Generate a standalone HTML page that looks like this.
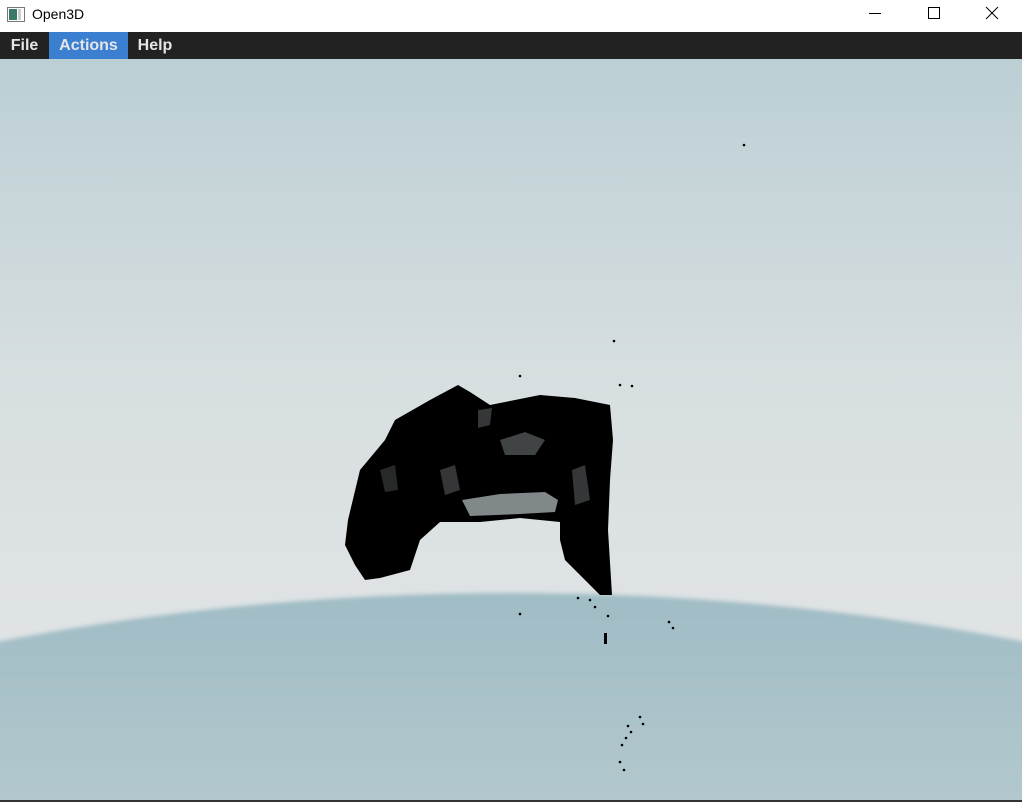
<!DOCTYPE html>
<html><head><style>
html,body{margin:0;padding:0;width:1022px;height:802px;overflow:hidden;background:#fff;font-family:"Liberation Sans","Noto Sans CJK SC",sans-serif}
.title{position:absolute;left:0;top:0;width:1022px;height:32px;background:#fff}
.title .t{position:absolute;left:32px;top:6px;font-size:14px;color:#000}
.menu{position:absolute;left:0;top:32px;width:1022px;height:27px;background:#222}
.menu span{position:absolute;top:0;height:27px;line-height:27px;color:#e6e6e6;font-size:16px;font-weight:bold}
svg{display:block}
</style></head><body>
<div class="title">
<svg style="position:absolute;left:7px;top:7px" width="18" height="16"><rect x="0.5" y="0.5" width="17" height="14" fill="#fff" stroke="#777"/><rect x="2" y="2" width="8" height="11" fill="#3b7a6a"/><rect x="11" y="2" width="3" height="11" fill="#ccc"/></svg>
<div class="t">Open3D</div>
<svg style="position:absolute;left:860px;top:0" width="162" height="32" stroke="#000" stroke-width="1" fill="none">
<line x1="9" y1="13.5" x2="21" y2="13.5"/>
<rect x="68.5" y="7.5" width="11" height="11"/>
<line x1="126" y1="7" x2="138" y2="19"/><line x1="138" y1="7" x2="126" y2="19"/>
</svg>
</div>
<div class="menu">
<span style="left:0;width:49px;text-align:center">File</span>
<span style="left:49px;width:79px;background:#3b7fd0;text-align:center">Actions</span>
<span style="left:128px;width:54px;text-align:center">Help</span>
</div>
<svg style="position:absolute;left:0;top:59px" width="1022" height="743" viewBox="0 59 1022 743">
<defs>
<linearGradient id="sky" x1="0" y1="0" x2="0" y2="1">
<stop offset="0" stop-color="#bccfd4"/><stop offset="0.45" stop-color="#d8dfe1"/><stop offset="1" stop-color="#e4e6e7"/></linearGradient>
<linearGradient id="gr" x1="0" y1="592" x2="0" y2="800" gradientUnits="userSpaceOnUse">
<stop offset="0" stop-color="#a0bcc5"/><stop offset="1" stop-color="#b2c8cd"/></linearGradient>
<filter id="bl"><feGaussianBlur stdDeviation="2"/></filter>
</defs>
<rect x="0" y="59" width="1022" height="743" fill="url(#sky)"/>
<ellipse cx="511" cy="1400" rx="1500" ry="807" fill="url(#gr)" filter="url(#bl)"/>
<rect x="0" y="800" width="1022" height="2" fill="#333"/>
<g fill="#000">
<path d="M348,520 L360,470 L385,440 L395,420 L430,400 L458,385 L470,392 L490,405 L540,395 L575,398 L610,405 L613,440 L610,480 L608,530 L612,595 L600,595 L585,580 L565,560 L560,540 L560,522 L520,518 L480,522 L440,522 L420,540 L410,570 L380,578 L365,580 L355,565 L345,545 Z"/>
</g>
<g fill="#b8c2c5" opacity="0.7">
<path d="M462,500 L500,494 L545,492 L558,500 L555,512 L520,514 L470,516 Z"/>
<path d="M500,440 L525,432 L545,440 L535,455 L505,455 Z" opacity="0.5"/>
<path d="M440,470 L455,465 L460,490 L445,495 Z" opacity="0.4"/>
<path d="M572,470 L585,465 L590,500 L575,505 Z" opacity="0.4"/>
<path d="M380,470 L395,465 L398,490 L385,492 Z" opacity="0.3"/>
<path d="M478,410 L492,408 L490,425 L478,428 Z" opacity="0.4"/>
</g>
<g fill="#000">
<circle cx="744" cy="145" r="1.3"/><circle cx="614" cy="341" r="1.3"/><circle cx="520" cy="376" r="1.3"/>
<circle cx="620" cy="385" r="1.3"/><circle cx="632" cy="386" r="1.3"/><circle cx="520" cy="614" r="1.3"/>
<circle cx="669" cy="622" r="1.3"/><circle cx="673" cy="628" r="1.3"/><circle cx="608" cy="616" r="1.3"/>
<rect x="604" y="633" width="3" height="11"/>
<circle cx="640" cy="717" r="1.3"/><circle cx="643" cy="724" r="1.3"/><circle cx="628" cy="726" r="1.3"/>
<circle cx="631" cy="732" r="1.3"/><circle cx="626" cy="738" r="1.3"/><circle cx="622" cy="745" r="1.3"/>
<circle cx="620" cy="762" r="1.3"/><circle cx="624" cy="770" r="1.3"/>
<circle cx="590" cy="600" r="1.3"/><circle cx="578" cy="598" r="1.3"/><circle cx="595" cy="607" r="1.3"/>
</g>
</svg>
</body></html>
